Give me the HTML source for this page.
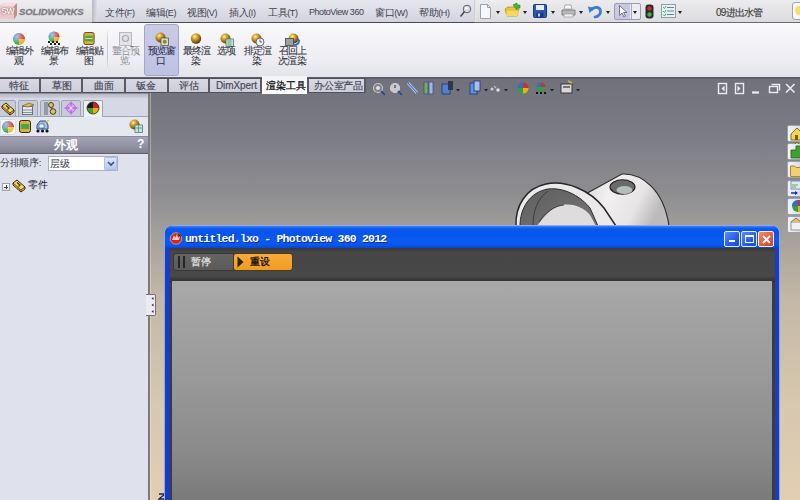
<!DOCTYPE html>
<html><head><meta charset="utf-8">
<style>
*{box-sizing:border-box;margin:0;padding:0}
html,body{width:800px;height:500px;overflow:hidden;background:#888}
body{position:relative;font-family:"Liberation Sans",sans-serif;font-size:10px;color:#333}
.a{position:absolute}
#top{left:0;top:0;width:800px;height:22px;background:#e2e2e6}
#logo{left:0;top:0;width:92px;height:22px;background:linear-gradient(#eeeef0,#dcdce0)}
#menu{left:92px;top:0;width:384px;height:22px;background:linear-gradient(#e6e7ee,#d2d3de)}
#tbar{left:476px;top:0;width:324px;height:22px;background:linear-gradient(#ececee,#dcdce0)}
#topline{left:0;top:22px;width:800px;height:1px;background:linear-gradient(90deg,#8a8a90 0,#8a8a90 92px,#4a4a56 92px,#4a4a56 474px,#6a6a72 474px)}
#ribbon{left:0;top:23px;width:800px;height:55px;background:linear-gradient(#fafafc,#ececf2 70%,#e2e3ea)}
#ribline{left:0;top:77px;width:800px;height:2px;background:#5e5e68}
#tabs{left:0;top:79px;width:366px;height:14px;background:linear-gradient(#d8d9e2,#cccdd8)}
#view{left:150px;top:79px;width:650px;height:421px;background:linear-gradient(#70717b 0px,#7a7a83 50px,#8c8c90 110px,#a09e9a 150px,#c4b8a6 221px,#d8c8b0 330px,#e2ceb2 421px)}
#left{left:0;top:93px;width:148px;height:407px;background:#dfe2ec}
#split{left:148px;top:93px;width:2px;height:407px;background:#7a7a7a}
.mi{position:absolute;top:6px;font-size:10px;color:#40404c;white-space:nowrap;letter-spacing:-0.4px}
.dd{position:absolute;width:0;height:0;border-left:2.5px solid transparent;border-right:2.5px solid transparent;border-top:3px solid #222}
.rb{position:absolute;top:0;text-align:center;font-size:10px;line-height:10px;color:#34343e;white-space:nowrap;letter-spacing:-0.8px;text-indent:0.8px;-webkit-text-stroke:0.1px #34343e}
.tb{position:absolute;top:80px;font-size:9.5px;line-height:11px;color:#444454;white-space:nowrap;-webkit-text-stroke:0.15px #444454}
.ltab{position:absolute;top:100px;height:17px;background:#c8ccd8;border:1px solid #a0a4b4;border-radius:2px 2px 0 0}
.xb{position:absolute;top:231px;width:16px;height:16px;border:1px solid #e8f0ff;border-radius:2px}
.tpb{position:absolute;left:787px;width:16px;height:17px;background:linear-gradient(90deg,#f4f4f8,#d8dae4);border:1px solid #9ca0b0;border-radius:2px}
</style></head><body>
<div id="top" class="a"></div>
<div id="logo" class="a"></div>
<div id="menu" class="a"></div>
<div id="tbar" class="a"></div>

<svg class="a" style="left:0;top:2px" width="17" height="18" viewBox="0 0 17 18">
 <path d="M0 4l4-3h13v12l-3 4H0z" fill="#d8a8a8"/>
 <path d="M0 4h14v13H0z" fill="#ecc8c8"/>
 <path d="M14 4l3-3v12l-3 4z" fill="#c09090"/>
 <path d="M0 4l4-3h13l-3 3z" fill="#f4dcdc"/>
</svg>
<div class="a" style="left:1px;top:6px;font-size:9px;font-weight:bold;color:#fff8f8;letter-spacing:-0.8px;text-shadow:0 0 1px #904848,0 0 1px #904848">SW</div>
<div class="a" style="left:19px;top:6px;font-size:9.5px;font-weight:bold;font-style:italic;color:#7c7c84;-webkit-text-stroke:0.3px #7c7c84;letter-spacing:-0.1px">SOLIDWORKS</div>
<div class="a" style="left:92px;top:0;width:5px;height:22px;background:linear-gradient(90deg,#b8b8c4,#dcdce6)"></div>
<div class="mi" style="left:105px">文件<span style="font-size:9px">(F)</span></div>
<div class="mi" style="left:146px">编辑<span style="font-size:9px">(E)</span></div>
<div class="mi" style="left:187px">视图<span style="font-size:9px">(V)</span></div>
<div class="mi" style="left:229px">插入<span style="font-size:9px">(I)</span></div>
<div class="mi" style="left:268px">工具<span style="font-size:9px">(T)</span></div>
<div class="mi" style="left:309px;font-size:9px;top:7px;letter-spacing:-0.45px">PhotoView 360</div>
<div class="mi" style="left:375px">窗口<span style="font-size:9px">(W)</span></div>
<div class="mi" style="left:419px">帮助<span style="font-size:9px">(H)</span></div>

<div class="a" style="left:474px;top:0;width:2px;height:22px;background:linear-gradient(90deg,#c4c4cc,#f0f0f2)"></div>
<svg class="a" style="left:478px;top:3px" width="16" height="17" viewBox="0 0 16 17">
 <path d="M2.5 1.5h7l3 3v11h-10z" fill="#f4f6fa" stroke="#9aa0b0"/>
 <path d="M9.5 1.5v3h3" fill="none" stroke="#9aa0b0"/>
</svg>
<div class="dd" style="left:496px;top:11px"></div>
<svg class="a" style="left:504px;top:2px" width="18" height="16" viewBox="0 0 18 16">
 <path d="M1 7l3-2h9l2 2-2 7H3z" fill="#e8c440" stroke="#b89020" stroke-width="0.8"/>
 <path d="M3 9h12l-2 5H2z" fill="#f4d860"/>
 <path d="M9 3l4-2v2h3v3h-3v2z" fill="#48b830" stroke="#2a8020" stroke-width="0.6"/>
</svg>
<div class="dd" style="left:523px;top:11px"></div>
<svg class="a" style="left:533px;top:4px" width="14" height="14" viewBox="0 0 14 14">
 <rect x="0.5" y="0.5" width="13" height="13" rx="1" fill="#3058b0" stroke="#1c3a80"/>
 <rect x="3" y="1" width="8" height="5" fill="#e8eef8"/>
 <rect x="3.5" y="8.5" width="7" height="5" fill="#1c3a80"/>
 <rect x="5" y="9.5" width="2" height="3" fill="#c8d4ec"/>
</svg>
<div class="dd" style="left:551px;top:11px"></div>
<svg class="a" style="left:561px;top:4px" width="15" height="14" viewBox="0 0 15 14">
 <path d="M4 1h6l1 4H3z" fill="#f8f8f8" stroke="#9a9a9a" stroke-width="0.8"/>
 <path d="M1 6h13v5H1z" fill="#b8b8b8" stroke="#707070" stroke-width="0.8"/>
 <path d="M3 10h9v3H3z" fill="#f0f0f0" stroke="#909090" stroke-width="0.6"/>
</svg>
<div class="dd" style="left:579px;top:11px"></div>
<svg class="a" style="left:587px;top:3px" width="16" height="16" viewBox="0 0 16 16">
 <path d="M4.5 6.5C7 3.5 13 3.5 13.5 8C14 11.5 10.5 13.5 8 14" fill="none" stroke="#3a7ad0" stroke-width="2.8" stroke-linecap="round"/>
 <path d="M1 3.5L7.5 5 2.5 10z" fill="#3a7ad0"/>
</svg>
<div class="dd" style="left:606px;top:11px"></div>
<div class="a" style="left:614px;top:3px;width:27px;height:17px;border:1px solid #9a9cb8;border-radius:2px;background:linear-gradient(90deg,#c8c8e2 0,#c8c8e2 62%,#ececf2 62%)"></div>
<div class="a" style="left:631px;top:4px;width:1px;height:15px;background:#a8aac4"></div>
<svg class="a" style="left:618px;top:5px" width="10" height="13" viewBox="0 0 10 13">
 <path d="M1.5 0.5v10l2.5-2.5 2 4 1.5-0.8-2-3.7h3.5z" fill="#fff" stroke="#6a6a78" stroke-width="0.9"/>
</svg>
<div class="dd" style="left:633px;top:11px"></div>
<svg class="a" style="left:645px;top:4px" width="9" height="15" viewBox="0 0 9 15">
 <rect x="0.5" y="0.5" width="8" height="14" rx="3" fill="#2a2a2a"/>
 <circle cx="4.5" cy="4.5" r="2.2" fill="#c03030"/>
 <circle cx="4.5" cy="10.5" r="2.2" fill="#40b040"/>
</svg>
<svg class="a" style="left:661px;top:4px" width="15" height="14" viewBox="0 0 15 14">
 <rect x="0.5" y="0.5" width="14" height="13" fill="#e8f0f0" stroke="#8aa0a8"/>
 <path d="M6 3.5h7M6 7h7M6 10.5h7" stroke="#5a8898" stroke-width="1"/>
 <path d="M2 3l1.5 1.5L5 2M2 7l1.5 1.5L5 6M2 10.5l1.5 1.5L5 9.5" fill="none" stroke="#40a060" stroke-width="0.9"/>
</svg>
<div class="dd" style="left:678px;top:11px"></div>
<div class="a" style="left:716px;top:6px;font-size:10px;color:#3a3a3a;letter-spacing:-0.8px;-webkit-text-stroke:0.15px #3a3a3a">09进出水管</div>
<div class="a" style="left:792px;top:2px;width:12px;height:18px;border:1px solid #a0a0b0;border-radius:3px;background:#f8f8f0"></div>
<div class="a" style="left:795px;top:6px;width:8px;height:9px;border-radius:50%;background:#f0e070"></div>
<div id="topline" class="a"></div>
<div id="ribbon" class="a"></div>

<!-- pin icon -->
<svg class="a" style="left:459px;top:4px" width="13" height="14" viewBox="0 0 13 14">
 <circle cx="8" cy="5" r="3.8" fill="#d8d8dc" stroke="#606068" stroke-width="1"/>
 <circle cx="7.3" cy="4.2" r="1.3" fill="#fff"/>
 <path d="M5.5 7.5L1.5 12.5" stroke="#404048" stroke-width="1.4"/>
</svg>
<!-- ribbon buttons -->
<svg class="a" style="left:12px;top:32px" width="14" height="14" viewBox="0 0 14 14">
 <defs><radialGradient id="sh" cx="35%" cy="30%" r="70%"><stop offset="0" stop-color="#fff" stop-opacity=".6"/><stop offset="1" stop-color="#fff" stop-opacity="0"/></radialGradient></defs>
 <path d="M7 7L7 1A6 6 0 0 1 13 7z" fill="#d03028"/>
 <path d="M7 7L13 7A6 6 0 0 1 7 13z" fill="#e8b020"/>
 <path d="M7 7L7 13A6 6 0 0 1 1 7z" fill="#30a040"/>
 <path d="M7 7L1 7A6 6 0 0 1 7 1z" fill="#3070c8"/>
 <circle cx="7" cy="7" r="6" fill="url(#sh)"/>
</svg>
<svg class="a" style="left:47px;top:31px" width="14" height="14" viewBox="0 0 14 14">
 <path d="M7 6L7 0.5A5.5 5.5 0 0 1 12.5 6z" fill="#d03028"/>
 <path d="M7 6L12.5 6A5.5 5.5 0 0 1 7 11.5z" fill="#e8b020"/>
 <path d="M7 6L7 11.5A5.5 5.5 0 0 1 1.5 6z" fill="#30a040"/>
 <path d="M7 6L1.5 6A5.5 5.5 0 0 1 7 0.5z" fill="#3070c8"/>
 <circle cx="7" cy="6" r="5.5" fill="url(#sh)"/>
 <path d="M1 10h2v2H1zM5 10h2v2H5zM9 10h2v2H9zM3 12h2v2H3zM7 12h2v2H7zM11 12h2v2h-2z" fill="#202020"/>
</svg>
<svg class="a" style="left:83px;top:32px" width="12" height="13" viewBox="0 0 12 14">
 <rect x="0.5" y="0.5" width="11" height="13" rx="2" fill="#d8b040" stroke="#5a4010"/>
 <rect x="2" y="4" width="8" height="6" fill="#48a848"/>
 <path d="M2 7h8" stroke="#f0e080" stroke-width="1"/>
</svg>
<div class="a" style="left:107px;top:29px;width:1px;height:43px;background:linear-gradient(#f0f0f4,#c8c8d0 30%,#c8c8d0 70%,#f0f0f4)"></div>
<svg class="a" style="left:119px;top:32px" width="13" height="14" viewBox="0 0 13 14">
 <rect x="0.5" y="0.5" width="12" height="13" fill="#e4e4e8" stroke="#b8b8c0"/>
 <circle cx="6.5" cy="6.5" r="3" fill="none" stroke="#a8a8b0" stroke-width="1.2"/>
</svg>
<div class="a" style="left:144px;top:24px;width:35px;height:52px;border:1px solid #a4a6c8;border-radius:3px;background:linear-gradient(#c8cae6,#c0c2e2)"></div>
<svg class="a" style="left:155px;top:32px" width="14" height="14" viewBox="0 0 14 14">
 <defs><radialGradient id="gold" cx="38%" cy="32%" r="68%"><stop offset="0" stop-color="#fff4b0"/><stop offset=".35" stop-color="#d8a830"/><stop offset=".8" stop-color="#8a6010"/><stop offset="1" stop-color="#4a3000"/></radialGradient></defs>
 <circle cx="5.5" cy="5.5" r="5" fill="url(#gold)"/>
 <rect x="6" y="6" width="7.5" height="7.5" fill="#d8dcc8" stroke="#506040" stroke-width="0.8"/>
 <circle cx="9.7" cy="9.7" r="2" fill="#a08030"/>
</svg>
<svg class="a" style="left:190px;top:33px" width="12" height="12" viewBox="0 0 12 12">
 <circle cx="6" cy="5.5" r="5.2" fill="url(#gold)"/>
</svg>
<svg class="a" style="left:220px;top:33px" width="14" height="14" viewBox="0 0 14 14">
 <circle cx="5.5" cy="5.5" r="5" fill="url(#gold)"/>
 <rect x="6" y="6" width="7.5" height="7.5" fill="#c8e0d8" stroke="#408070" stroke-width="0.8"/>
 <path d="M7.5 8h4M7.5 10h4M7.5 12h4" stroke="#40a060" stroke-width="0.8"/>
</svg>
<svg class="a" style="left:251px;top:33px" width="14" height="14" viewBox="0 0 14 14">
 <circle cx="5.5" cy="5.5" r="5" fill="url(#gold)"/>
 <circle cx="9" cy="9" r="4" fill="#f4f4f8" stroke="#6a6a7a" stroke-width="1"/>
 <path d="M9 6.5V9h2" stroke="#404050" stroke-width="0.8" fill="none"/>
</svg>
<svg class="a" style="left:285px;top:33px" width="15" height="14" viewBox="0 0 15 14">
 <circle cx="8.5" cy="5.5" r="5" fill="url(#gold)"/>
 <rect x="0.5" y="5.5" width="8" height="7" fill="#9aa0a8" stroke="#40444c" stroke-width="0.8"/>
 <path d="M9 12c3 0 5-2 5-5" stroke="#3870d0" stroke-width="2" fill="none"/>
 <path d="M11.5 7.5l2.5-2 1 3z" fill="#3870d0"/>
</svg>
<div class="rb" style="left:4px;top:46px;width:30px">编辑外<br>观</div>
<div class="rb" style="left:39px;top:46px;width:30px">编辑布<br>景</div>
<div class="rb" style="left:74px;top:46px;width:30px">编辑贴<br>图</div>
<div class="rb" style="left:110px;top:46px;width:30px;color:#b4b4bc">整合预<br>览</div>
<div class="rb" style="left:146px;top:46px;width:30px;color:#30305a">预览窗<br>口</div>
<div class="rb" style="left:181px;top:46px;width:30px">最终渲<br>染</div>
<div class="rb" style="left:211px;top:46px;width:30px">选项</div>
<div class="rb" style="left:242px;top:46px;width:30px">排定渲<br>染</div>
<div class="rb" style="left:277px;top:46px;width:30px">召回上<br>次渲染</div>
<div id="ribline" class="a"></div>
<div id="view" class="a"></div>
<div id="tabs" class="a"></div>

<div class="a" style="left:0;top:78px;width:366px;height:1px;background:#50505a"></div>
<div class="a" style="left:0;top:92px;width:366px;height:1px;background:#50505a"></div>
<div class="a" style="left:39px;top:79px;width:2px;height:14px;background:#5a5a66"></div>
<div class="a" style="left:81px;top:79px;width:2px;height:14px;background:#5a5a66"></div>
<div class="a" style="left:124px;top:79px;width:2px;height:14px;background:#5a5a66"></div>
<div class="a" style="left:167px;top:79px;width:2px;height:14px;background:#5a5a66"></div>
<div class="a" style="left:208px;top:79px;width:2px;height:14px;background:#5a5a66"></div>
<div class="a" style="left:260px;top:79px;width:2px;height:14px;background:#5a5a66"></div>
<div class="a" style="left:307px;top:79px;width:2px;height:14px;background:#5a5a66"></div>
<div class="a" style="left:364px;top:79px;width:2px;height:14px;background:#5a5a66"></div>
<div class="a" style="left:262px;top:76px;width:45px;height:18px;background:linear-gradient(#f4f4f8,#ffffff)"></div>
<div class="tb" style="left:9px;">特征</div>
<div class="tb" style="left:52px;">草图</div>
<div class="tb" style="left:94px;">曲面</div>
<div class="tb" style="left:136px;">钣金</div>
<div class="tb" style="left:179px;">评估</div>
<div class="tb" style="left:216px;font-size:10px;letter-spacing:-0.1px;top:80px;">DimXpert</div>
<div class="tb" style="left:266px;color:#101010;-webkit-text-stroke:0.3px #101010">渲染工具</div>
<div class="tb" style="left:314px;letter-spacing:-0.2px">办公室产品</div>
<div id="left" class="a"></div>

<div class="a" style="left:0;top:93px;width:148px;height:1px;background:#8a8c98"></div>
<div class="a" style="left:0;top:94px;width:148px;height:4px;background:linear-gradient(#b8bac6,#ccd0dc)"></div>
<div class="a" style="left:0;top:98px;width:148px;height:19px;background:#d6d9e5"></div>
<div class="a" style="left:0;top:116px;width:148px;height:1px;background:#a0a4b4"></div>
<div class="ltab" style="left:-2px;width:18px"></div>
<div class="ltab" style="left:18px;width:20px"></div>
<div class="ltab" style="left:40px;width:20px"></div>
<div class="ltab" style="left:61px;width:20px"></div>
<div class="ltab" style="left:83px;width:20px;height:18px;background:#eef0f6;border-bottom:none"></div>
<svg class="a" style="left:1px;top:101px" width="15" height="15" viewBox="0 0 15 15">
 <path d="M1 5L5 2 13 9 13 11 9 14 1 7z" fill="#f0d860" stroke="#3a2a08" stroke-width="1"/>
 <path d="M1 5L9 12 13 9M9 12v2" fill="none" stroke="#3a2a08" stroke-width="0.9"/>
 <path d="M5 4.5l3 2.5-1.5 1.5" fill="none" stroke="#3a2a08" stroke-width="1.2"/>
 <path d="M2 6.5l7 6" stroke="#b08820" stroke-width="1"/>
</svg>
<svg class="a" style="left:21px;top:102px" width="14" height="13" viewBox="0 0 14 13">
 <rect x="1.5" y="4.5" width="10" height="8" fill="#e8eaf0" stroke="#6a7080"/>
 <path d="M2 8h9M2 10.5h9" stroke="#8090a8" stroke-width="1"/>
 <path d="M1 4l7-3 5 2-6 2z" fill="#d8b860" stroke="#806020" stroke-width="0.7"/>
</svg>
<svg class="a" style="left:43px;top:101px" width="14" height="15" viewBox="0 0 14 15">
 <path d="M2 1v13M4 1v13" stroke="#606878" stroke-width="1"/>
 <circle cx="8" cy="4" r="2.5" fill="#d8c070" stroke="#403010" stroke-width="0.9"/>
 <circle cx="10" cy="10.5" r="2.8" fill="#d8c070" stroke="#403010" stroke-width="0.9"/>
 <path d="M8 6.5l1.5 1.5" stroke="#403010"/>
</svg>
<svg class="a" style="left:64px;top:101px" width="14" height="14" viewBox="0 0 14 14">
 <circle cx="7" cy="7" r="4.5" fill="#d8a8f0" stroke="#c060e8" stroke-width="1"/>
 <path d="M7 0.5v13M0.5 7h13" stroke="#c060e8" stroke-width="1.3"/>
 <circle cx="7" cy="7" r="1.5" fill="#f4e8fc"/>
</svg>
<svg class="a" style="left:86px;top:101px" width="14" height="14" viewBox="0 0 14 14">
 <path d="M7 7L7 1A6 6 0 0 1 13 7z" fill="#c82818"/>
 <path d="M7 7L13 7A6 6 0 0 1 7 13z" fill="#e8b010"/>
 <path d="M7 7L7 13A6 6 0 0 1 1 7z" fill="#48a028"/>
 <path d="M7 7L1 7A6 6 0 0 1 7 1z" fill="#181818"/>
 <circle cx="7" cy="7" r="6" fill="none" stroke="#202020" stroke-width="0.8"/>
</svg>
<div class="a" style="left:0;top:117px;width:148px;height:19px;background:#e6e8ef"></div>
<div class="a" style="left:0;top:119px;width:16px;height:16px;background:#fafafc;border-radius:2px;border:1px solid #d8dae4"></div>
<svg class="a" style="left:1px;top:120px" width="14" height="14" viewBox="0 0 14 14">
 <path d="M7 7L7 1A6 6 0 0 1 13 7z" fill="#d03028"/>
 <path d="M7 7L13 7A6 6 0 0 1 7 13z" fill="#e8c030"/>
 <path d="M7 7L7 13A6 6 0 0 1 1 7z" fill="#30a040"/>
 <path d="M7 7L1 7A6 6 0 0 1 7 1z" fill="#3070c8"/>
 <circle cx="7" cy="7" r="6" fill="url(#sh)"/>
</svg>
<svg class="a" style="left:19px;top:120px" width="12" height="13" viewBox="0 0 12 13">
 <rect x="0.5" y="0.5" width="11" height="12" rx="2" fill="#d8b040" stroke="#3a2808"/>
 <rect x="2" y="4" width="8" height="5" fill="#48a848"/>
</svg>
<svg class="a" style="left:35px;top:119px" width="15" height="14" viewBox="0 0 15 14">
 <path d="M2 6l3-4h6l2 4v4H2z" fill="#a8c0e0" stroke="#2050a0" stroke-width="1"/>
 <rect x="4" y="5" width="5" height="4" fill="#f0f4fa" stroke="#2050a0" stroke-width="0.6"/>
 <circle cx="3" cy="12" r="1.6" fill="#101010"/><circle cx="7.5" cy="12" r="1.6" fill="#101010"/><circle cx="12" cy="12" r="1.6" fill="#101010"/>
 <path d="M11 3l3-2" stroke="#e0c020" stroke-width="1.2"/>
</svg>
<svg class="a" style="left:129px;top:119px" width="14" height="14" viewBox="0 0 14 14">
 <circle cx="5.5" cy="5.5" r="5" fill="url(#gold)"/>
 <rect x="6" y="6" width="7.5" height="7.5" fill="#c8e4e0" stroke="#408080" stroke-width="0.8"/>
 <path d="M6.5 9h6.5M9.5 6.5v6.5" stroke="#408080" stroke-width="0.7"/>
</svg>
<div class="a" style="left:0;top:136px;width:148px;height:18px;background:linear-gradient(#a4a4b6,#9090a2 60%,#80808e);border-top:1px solid #8a8a98;border-bottom:1px solid #606070"></div>
<div class="a" style="left:54px;top:137px;font-size:12px;font-weight:bold;color:#fff;letter-spacing:0px">外观</div>
<div class="a" style="left:137px;top:137px;font-size:12px;font-weight:bold;color:#fff">?</div>
<div class="a" style="left:0;top:157px;font-size:9.5px;color:#303040;white-space:nowrap;letter-spacing:-0.3px">分排顺序:</div>
<div class="a" style="left:48px;top:156px;width:70px;height:15px;background:#fff;border:1px solid #a8b0c8"></div>
<div class="a" style="left:50px;top:158px;font-size:9.5px;color:#303040">层级</div>
<div class="a" style="left:104px;top:157px;width:13px;height:13px;background:linear-gradient(#dce6f8,#b8c8ec);border:1px solid #b0c0e0;border-radius:1px"></div>
<svg class="a" style="left:107px;top:161px" width="8" height="6" viewBox="0 0 8 6"><path d="M1 1l3 3 3-3" fill="none" stroke="#3050a0" stroke-width="1.6"/></svg>
<div class="a" style="left:2px;top:183px;width:8px;height:8px;border:1px solid #a0a0a8;background:linear-gradient(#fff,#e0e0e4)"></div>
<div class="a" style="left:4px;top:186.5px;width:4px;height:1px;background:#404040"></div>
<div class="a" style="left:5.5px;top:185px;width:1px;height:4px;background:#404040"></div>
<svg class="a" style="left:12px;top:178px" width="15" height="15" viewBox="0 0 15 15">
 <path d="M1 5L5 2 13 9 13 11 9 14 1 7z" fill="#f0d860" stroke="#3a2a08" stroke-width="1"/>
 <path d="M1 5L9 12 13 9M9 12v2" fill="none" stroke="#3a2a08" stroke-width="0.9"/>
 <path d="M5 4.5l3 2.5-1.5 1.5" fill="none" stroke="#3a2a08" stroke-width="1.2"/>
 <path d="M2 6.5l7 6" stroke="#b08820" stroke-width="1"/>
</svg>
<div class="a" style="left:28px;top:179px;font-size:9.5px;color:#202030">零件</div>
<div id="split" class="a"></div><div class="a" style="left:150px;top:93px;width:1px;height:407px;background:rgba(255,250,240,.35)"></div>


<svg class="a" style="left:500px;top:160px" width="180" height="70" viewBox="500 160 180 70">
 <defs>
  <linearGradient id="cyl" x1="0" y1="0" x2="1" y2="0.3"><stop offset="0" stop-color="#d4d2d2"/><stop offset=".4" stop-color="#f2f0f0"/><stop offset=".75" stop-color="#e6e4e4"/><stop offset="1" stop-color="#bcbaba"/></linearGradient>
  <linearGradient id="inn" x1="0" y1="0" x2="1" y2="1"><stop offset="0" stop-color="#5e5e5e"/><stop offset="1" stop-color="#767676"/></linearGradient>
 </defs>
 <path d="M580,197 L622,174 C642,173 664,190 669,226 L592,226 Z" fill="url(#cyl)" stroke="#2a2a2a" stroke-width="1.1"/>
 <path d="M516,226 C515,206 526,188 546,184 C566,180 590,190 604,208 L616,226 Z" fill="#ebe9e9" stroke="#262626" stroke-width="1.5"/>
 <path d="M520,226 C520,208 530,192 548,189 C566,187 582,198 590,208 L598,226 Z" fill="url(#inn)" stroke="#2e2e2e" stroke-width="1"/>
 <path d="M533,226 C533,210 538,198 548,191" fill="none" stroke="#383838" stroke-width="0.9"/>
 <path d="M537,226 C542,219 550,208 562,205 C574,203 584,208 590,215 L596,226 Z" fill="#dedcdc"/>
 <path d="M539,222 C545,213 553,206 564,205" fill="none" stroke="#3a3a3a" stroke-width="0.9"/>
 <ellipse cx="622.5" cy="187" rx="12.5" ry="7.2" fill="#6a6a6a" stroke="#1e1e1e" stroke-width="1.1"/>
 <ellipse cx="624.5" cy="190" rx="8" ry="4" fill="#b4bcbc"/>
</svg>

<svg class="a" style="left:370px;top:80px" width="430" height="18" viewBox="370 80 430 18">
 <g fill="none" stroke-width="1.2">
  <circle cx="378" cy="88" r="4.5" stroke="#c8c8cc" fill="#808088"/><circle cx="378" cy="88" r="2" fill="#e0e0e4" stroke="none"/><path d="M381 91l4 4" stroke="#2040a0" stroke-width="1.6"/>
  <circle cx="395" cy="88" r="4.5" stroke="#d0d0d4" fill="#c8c8cc"/><path d="M395 85v3" stroke="#404040"/><path d="M398 91l4 4" stroke="#2040a0" stroke-width="1.6"/>
  <path d="M408 83l9 10" stroke="#a8c0e8" stroke-width="3"/><path d="M408 83l9 10" stroke="#3060c0" stroke-width="1"/>
  <rect x="424" y="82" width="4" height="12" fill="#70b050" stroke="#405080" stroke-width="0.8"/><rect x="429" y="82" width="4" height="12" fill="#a0b8e0" stroke="#405080" stroke-width="0.8"/>
  <rect x="442" y="84" width="8" height="10" fill="#5080d0" stroke="#203070" stroke-width="0.8"/><rect x="448" y="81" width="5" height="9" fill="#303848" stroke="none"/>
  <rect x="470" y="83" width="7" height="11" fill="#6090e0" stroke="#203070" stroke-width="0.8"/><rect x="474" y="81" width="6" height="10" fill="#a0c0f0" stroke="#203070" stroke-width="0.8"/>
  <circle cx="492" cy="89" r="1.5" fill="#d0d0d0" stroke="none"/><circle cx="498" cy="90" r="1.8" fill="#e0e0e0" stroke="none"/><path d="M494 86l2 2" stroke="#c0c0c0"/>
  <circle cx="523" cy="88" r="5.5" fill="#30a040" stroke="none"/><path d="M523 88V82.5A5.5 5.5 0 0 1 528.5 88z" fill="#d03028" stroke="none"/><path d="M523 88H528.5A5.5 5.5 0 0 1 523 93.5z" fill="#e8b020" stroke="none"/><path d="M523 88H517.5A5.5 5.5 0 0 1 523 82.5z" fill="#3070c8" stroke="none"/>
  <circle cx="541" cy="87" r="4.5" fill="#30a040" stroke="none"/><path d="M541 87V82.5A4.5 4.5 0 0 1 545.5 87z" fill="#d03028" stroke="none"/><path d="M541 87H536.5A4.5 4.5 0 0 1 541 82.5z" fill="#3070c8" stroke="none"/>
  <path d="M536 92h2v2h-2zM540 92h2v2h-2zM544 92h2v2h-2z" fill="#101010" stroke="none"/>
  <rect x="561" y="84" width="11" height="9" fill="#d8d8d8" stroke="#303030" stroke-width="0.9"/><path d="M563 87h7" stroke="#303030"/><path d="M568 81l4 2" stroke="#d8b060" stroke-width="1.5"/>
 </g>
 <g fill="#202028">
  <path d="M456 89h4l-2 2.5z"/><path d="M484 89h4l-2 2.5z"/><path d="M504 89h4l-2 2.5z"/><path d="M550 89h4l-2 2.5z"/><path d="M576 89h4l-2 2.5z"/>
 </g>
 <g fill="none" stroke="#ececf0" stroke-width="1.4">
  <rect x="718.5" y="83.5" width="8" height="10"/><path d="M724.5 85.5l-3 3 3 3z" fill="#ececf0" stroke="none"/>
  <rect x="735.5" y="83.5" width="8" height="10"/><path d="M737.5 85.5l3 3-3 3z" fill="#ececf0" stroke="none"/>
  <path d="M752 92.5h7" stroke-width="2.2"/>
  <rect x="769.5" y="86.5" width="8" height="6"/><path d="M771.5 84.5h8v6"/>
  <path d="M786 84l8.5 8.5M794.5 84l-8.5 8.5" stroke-width="1.6"/>
 </g>
</svg>
<div class="tpb" style="top:125px"></div><div class="tpb" style="top:143px"></div><div class="tpb" style="top:161px"></div><div class="tpb" style="top:180px"></div><div class="tpb" style="top:198px"></div><div class="tpb" style="top:216px"></div>
<svg class="a" style="left:789px;top:126px" width="12" height="106" viewBox="0 0 12 106">
 <path d="M2 8l6-6 6 6v6H2z" fill="#f0d860" stroke="#806010" stroke-width="0.9"/><rect x="6" y="9" width="3" height="5" fill="#806010"/>
 <path d="M2 24h5v-4h5v12H2z" fill="#40a030" stroke="#206010" stroke-width="0.8"/><path d="M6 18l2-2 2 2" fill="#f0c030" stroke="#806010" stroke-width="0.8"/>
 <path d="M1.5 40h4l1.5 1.5H13v9H1.5z" fill="#f0d070" stroke="#a08020" stroke-width="0.9"/>
 <rect x="2" y="55" width="10" height="8" fill="#e0e8f0" stroke="#6080a0" stroke-width="0.8"/><path d="M3 59h6M3 61h4" stroke="#40a040" stroke-width="0.8"/><path d="M2 67h6" stroke="#1030c0" stroke-width="1.5"/><path d="M6 65l3 2-3 2z" fill="#1030c0"/>
 <circle cx="9" cy="80" r="6" fill="#30a040"/><path d="M9 80V74A6 6 0 0 1 15 80z" fill="#d03028"/><path d="M9 80H15A6 6 0 0 1 9 86z" fill="#e8b020"/><path d="M9 80H3A6 6 0 0 1 9 74z" fill="#3070c8"/>
 <rect x="2" y="96" width="10" height="8" fill="#f0f0f0" stroke="#808080" stroke-width="0.8"/><path d="M2 96l5-4 5 4" fill="#e0c070" stroke="#806020" stroke-width="0.8"/>
</svg>
<div class="a" style="left:146px;top:294px;width:10px;height:22px;border:1px solid #707078;border-left:none;border-radius:0 2px 2px 0;background:#eceaf2"></div>
<svg class="a" style="left:150px;top:296px" width="5" height="18" viewBox="0 0 5 18"><path d="M3.5 1v3l-2-1.5zM3.5 7.5v3l-2-1.5zM3.5 14v3l-2-1.5z" fill="#303038"/></svg>
<svg class="a" style="left:158px;top:493px" width="8" height="7" viewBox="0 0 8 7"><path d="M1 1h6L1 6h6" fill="none" stroke="#202060" stroke-width="1.3"/></svg>
<div class="a" style="left:164px;top:225px;width:616px;height:275px;background:#1a3cc4;border-radius:8px 8px 0 0;border:1px solid #90a8e0;border-bottom:none"></div>
<div class="a" style="left:165px;top:226px;width:614px;height:22px;border-radius:7px 7px 0 0;background:linear-gradient(#4a8cf8 0,#2a6cf0 1px,#0a58ee 3px,#0654ec 8px,#0a5cf4 14px,#0a56ea 19px,#0648d4 22px)"></div>
<div class="a" style="left:170px;top:248px;width:605px;height:252px;background:#3c3c3c"></div>
<div class="a" style="left:170px;top:248px;width:605px;height:34px;background:linear-gradient(#383838 0,#464646 4px,#484848 28px,#3a3a3a 31px,#303030 34px)"></div>
<div class="a" style="left:172px;top:281px;width:600px;height:219px;background:linear-gradient(#a8a8a8 0,#a2a2a2 40px,#989898 100px,#8a8a8a 170px,#7a7a7a 218px)"></div>
<svg class="a" style="left:169px;top:231px" width="14" height="14" viewBox="0 0 14 14">
 <circle cx="7" cy="7.5" r="5.8" fill="#d82818"/>
 <path d="M3 9l2-5 1 3 2-4 1 4 2-2-1 4z" fill="#f8d0c0"/>
 <path d="M9 2c2 0 4 2 4 4l-3-1z" fill="#181818"/>
 <circle cx="7" cy="7.5" r="5.8" fill="none" stroke="#f0f0f0" stroke-width="0.7" opacity=".7"/>
</svg>
<div class="a" style="left:185px;top:232px;font-family:'Liberation Mono',monospace;font-weight:bold;font-size:11.5px;color:#fff;white-space:nowrap;letter-spacing:-0.8px;text-shadow:1px 1px 0 #0a2a9a">untitled.lxo - Photoview 360 2012</div>
<div class="xb" style="left:724px;background:linear-gradient(135deg,#5a8cf8,#2a5ae8 60%,#1a48d8)"></div>
<div class="a" style="left:729px;top:240px;width:6px;height:2px;background:#fff"></div>
<div class="xb" style="left:741px;background:linear-gradient(135deg,#5a8cf8,#2a5ae8 60%,#1a48d8)"></div>
<div class="a" style="left:745px;top:235px;width:9px;height:8px;border:1px solid #fff;border-top-width:2px"></div>
<div class="xb" style="left:758px;background:linear-gradient(135deg,#f0906a,#e05a38 60%,#c84020)"></div>
<svg class="a" style="left:761px;top:234px" width="11" height="11" viewBox="0 0 11 11"><path d="M2 2l7 7M9 2l-7 7" stroke="#fff" stroke-width="1.8"/></svg>
<div class="a" style="left:173px;top:253px;width:62px;height:18px;background:linear-gradient(#646464,#5a5a5a);border-radius:3px;border:1px solid #383838"></div>
<div class="a" style="left:178px;top:256px;width:2px;height:12px;background:#242424"></div>
<div class="a" style="left:183px;top:256px;width:2px;height:12px;background:#242424"></div>
<div class="a" style="left:191px;top:256px;font-size:9.5px;color:#e8e8e8;-webkit-text-stroke:0.2px #e8e8e8">暂停</div>
<div class="a" style="left:233px;top:253px;width:60px;height:18px;background:linear-gradient(#f8aa38,#f09c24);border-radius:3px;border:1px solid #4a3a20"></div>
<svg class="a" style="left:237px;top:256px" width="7" height="12" viewBox="0 0 7 12"><path d="M0.5 0.5L6.5 6 0.5 11.5z" fill="#2a2418"/></svg>
<div class="a" style="left:250px;top:256px;font-size:9.5px;color:#1a1408;-webkit-text-stroke:0.35px #1a1408">重设</div>
</body></html>
